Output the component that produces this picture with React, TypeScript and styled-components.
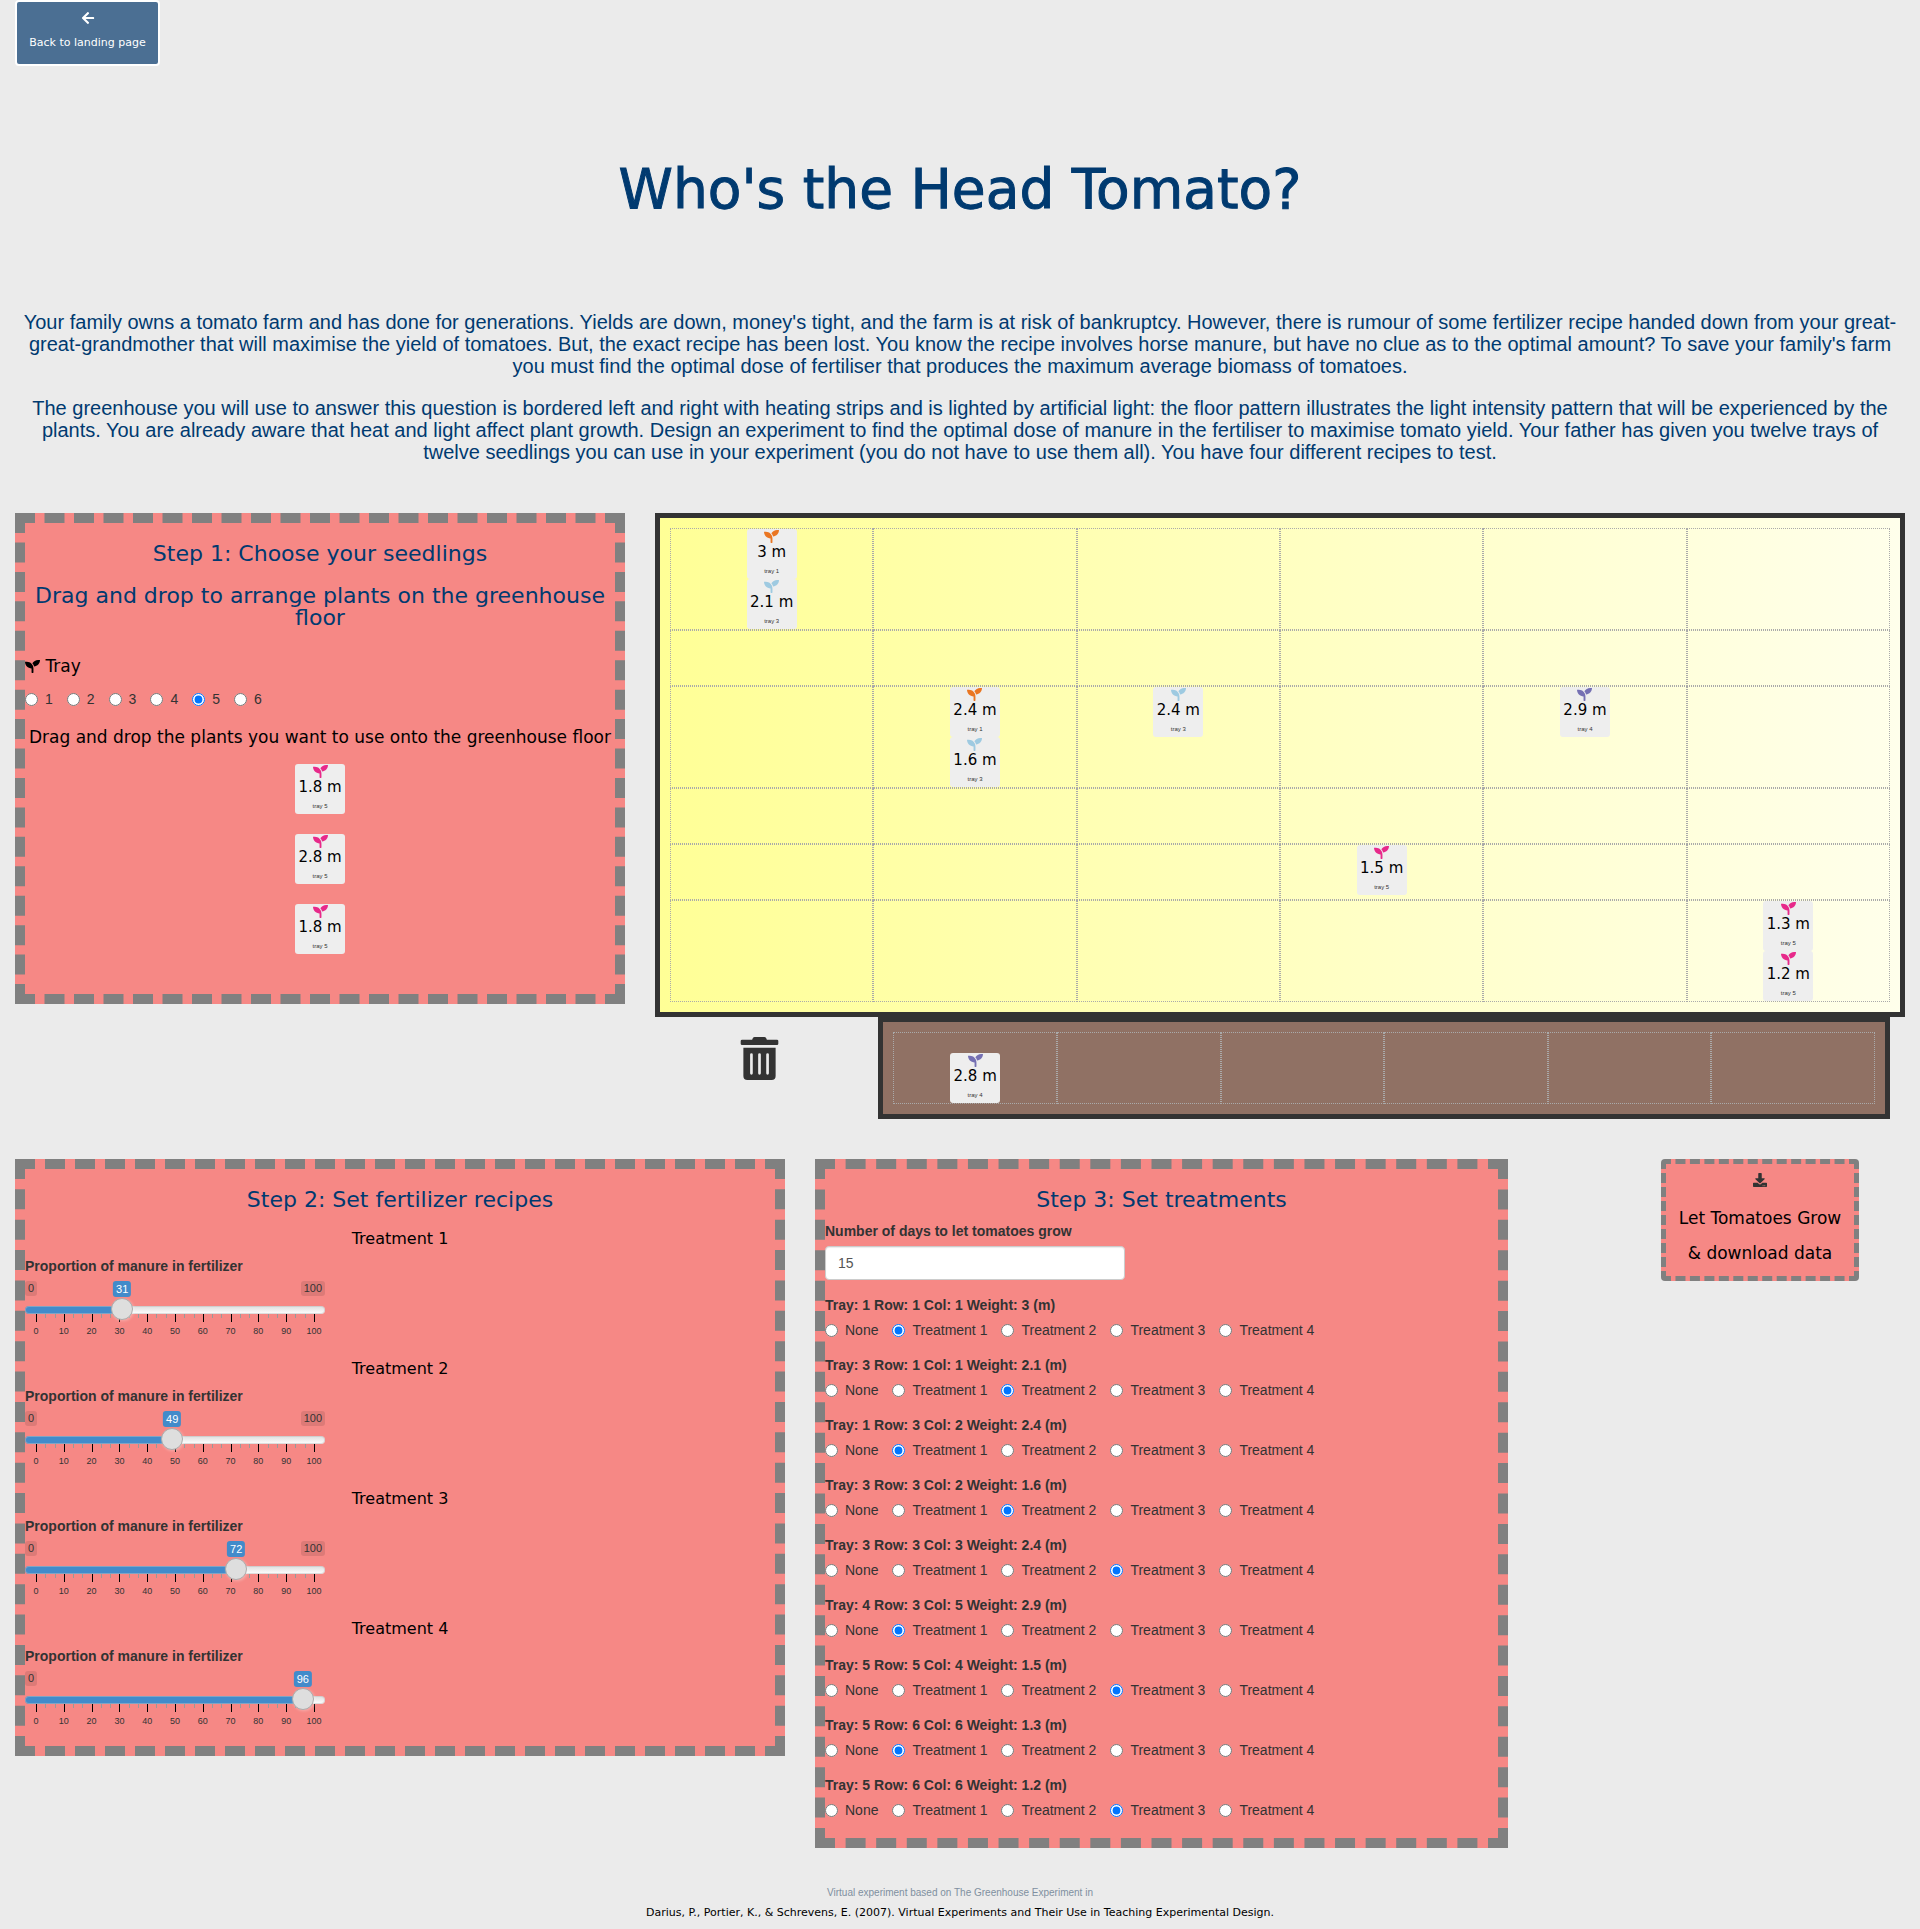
import React, { useState } from "react";
import styled, { createGlobalStyle } from "styled-components";
import { FaArrowLeft, FaDownload, FaSeedling, FaTrashAlt } from "react-icons/fa";

const display = `"DejaVu Sans", sans-serif`;
const body = `"Liberation Sans", Arial, sans-serif`;
const navy = "#003a70";
const salmon = "#f68885";

const GlobalStyle = createGlobalStyle`
  *, *::before, *::after { box-sizing: border-box; }
  body {
    margin: 0;
    background: #ebebeb;
    color: #333;
    font: 14px/20px ${body};
  }
  h1, h2, h3, p { margin: 0; font-weight: 400; }
`;

const Page = styled.div`
  padding: 0 0 6px;
`;

const Header = styled.header`
  padding: 0 15px;
`;

const BackLink = styled.a`
  display: inline-flex;
  flex-direction: column;
  align-items: center;
  gap: 10px;
  height: 66px;
  min-width: 145px;
  padding: 9px 12px;
  border: 2px solid #fff;
  border-radius: 4px;
  background: #4b6f93;
  color: #fff;
  font: 11px/16px ${display};
  text-decoration: none;
`;

const Title = styled.h1`
  margin: 93px 0 92px;
  color: ${navy};
  font: 55px/60px ${display};
  text-align: center;
  -webkit-text-stroke: 1px ${navy};
`;

const Intro = styled.div`
  display: grid;
  gap: 20px;
  color: ${navy};
  font-size: 20px;
  line-height: 22px;
  text-align: center;
`;

const Columns = styled.div<{ $template: string; $top: number }>`
  display: grid;
  grid-template-columns: ${(p) => p.$template};
  align-items: start;
  margin-top: ${(p) => p.$top}px;
`;

const Column = styled.div`
  min-width: 0;
  padding: 0 15px;
`;

const Panel = styled.section<{ $width?: string }>`
  width: ${(p) => p.$width ?? "100%"};
  border: 10px dashed #808080;
  background: ${salmon};
`;

const StepTitle = styled.h2`
  margin-top: 20px;
  color: ${navy};
  font: 22px/22px ${display};
  text-align: center;
`;

const SubTitle = styled.h3<{ $align?: string; $top: number; $size?: number }>`
  margin-top: ${(p) => p.$top}px;
  color: #000;
  font: ${(p) => p.$size ?? 17}px/20px ${display};
  text-align: ${(p) => p.$align ?? "center"};

  svg { vertical-align: -2px; }
`;

const ChoiceGroup = styled.fieldset<{ $top: number }>`
  margin: ${(p) => p.$top}px 0 0;
  padding: 0;
  border: 0;
`;

const GroupLabel = styled.legend`
  display: block;
  margin-bottom: 5px;
  padding: 0;
  font-weight: 700;
`;

const Choice = styled.label`
  display: inline-block;
  vertical-align: top;

  & + & { margin-left: 14px; }

  input {
    float: left;
    margin: 4px 7px 0 0;
  }
`;

const Tray = styled.div`
  display: flex;
  flex-direction: column;
  align-items: center;
  gap: 20px;
  padding: 17px 0 40px;
`;

const PlantTag = styled.div<{ $color: string }>`
  display: flex;
  flex-direction: column;
  align-items: center;
  width: 50px;
  height: 50px;
  border-radius: 3px;
  background: #eee;
  cursor: grab;

  svg { flex: none; color: ${(p) => p.$color}; }
`;

const PlantHeight = styled.span`
  color: #000;
  font: 15px/16px ${display};
  white-space: nowrap;
`;

const PlantTray = styled.span`
  margin-top: 7px;
  font-size: 6px;
  line-height: 8px;
`;

const Plot = styled.div<{ $background: string }>`
  display: grid;
  grid-template-columns: repeat(6, 1fr);
  padding: 10px;
  border: 5px solid #333;
  background: ${(p) => p.$background};
`;

const Cell = styled.div<{ $min: number; $align: string }>`
  display: flex;
  flex-direction: column;
  align-items: center;
  justify-content: ${(p) => p.$align};
  min-height: ${(p) => p.$min}px;
  border: 1px dotted #aaa;
`;

const Bin = styled.button`
  display: block;
  margin: 20px auto 0;
  padding: 0;
  border: 0;
  background: none;
  color: #333;
  line-height: 0;
`;

const Recipe = styled.div`
  & + & { margin-top: 18px; }
`;

const RecipeList = styled.div`
  padding: 18px 0 15px;
`;

const FieldLabel = styled.label<{ $top: number }>`
  display: block;
  margin: ${(p) => p.$top}px 0 5px;
  font-weight: 700;
`;

const Slider = styled.div`
  position: relative;
  width: 300px;
  height: 60px;
`;

const Limits = styled.div`
  display: flex;
  justify-content: space-between;
  height: 18px;
`;

const Limit = styled.span`
  height: 15px;
  padding: 0 3px;
  border-radius: 3px;
  background: rgba(0, 0, 0, 0.1);
  font-size: 11px;
  line-height: 15px;
`;

const Bubble = styled.output`
  position: absolute;
  top: 0;
  padding: 0 3px;
  border-radius: 3px;
  background: #428bca;
  color: #fff;
  font-size: 11px;
  line-height: 16px;
  transform: translateX(-50%);
`;

const Range = styled.input`
  position: relative;
  z-index: 1;
  display: block;
  width: 100%;
  height: 22px;
  margin: 0;
  appearance: none;
  background: none;

  &::-webkit-slider-runnable-track {
    height: 8px;
    border-radius: 8px;
    background:
      linear-gradient(#428bca, #428bca) 0 0 / var(--fill) 100% no-repeat,
      linear-gradient(#dedede, #fff);
    box-shadow: inset 0 0 0 1px rgba(190, 190, 190, 0.5);
  }

  &::-webkit-slider-thumb {
    width: 22px;
    height: 22px;
    margin-top: -8px;
    appearance: none;
    border: 1px solid #ababab;
    border-radius: 50%;
    background: #dedede;
    box-shadow: 1px 1px 3px rgba(255, 255, 255, 0.3);
  }
`;

const Scale = styled.svg`
  display: block;
  width: 100%;
  height: 8px;
  margin-top: -7px;
`;

const ScaleNumbers = styled.div`
  display: flex;
  justify-content: space-between;
  margin-top: 4px;
  padding: 0 1px;
  font-size: 9px;
  line-height: 10px;
`;

const ScaleNumber = styled.span`
  width: 20px;
  text-align: center;
`;

const NumberBox = styled.input`
  display: block;
  width: 300px;
  height: 34px;
  padding: 6px 12px;
  border: 1px solid #ccc;
  border-radius: 4px;
  background: #fff;
  box-shadow: inset 0 1px 1px rgba(0, 0, 0, 0.08);
  color: #555;
  font: inherit;
  appearance: textfield;

  &::-webkit-inner-spin-button { appearance: none; }
`;

const Treatments = styled.div`
  padding-bottom: 18px;
`;

const DownloadButton = styled.button`
  display: flex;
  flex-direction: column;
  align-items: center;
  gap: 15px;
  min-width: 198px;
  margin: 0 auto;
  padding: 9px 10px 13px;
  border: 5px dashed #808080;
  border-radius: 4px;
  background: ${salmon};
  color: #000;
  font: 17px/20px ${display};

  svg {
    margin-bottom: 6px;
    color: #333;
  }
`;

const Footer = styled.footer`
  margin-top: 35px;
  text-align: center;
`;

const Source = styled.p`
  color: #8090a0;
  font-size: 10px;
  line-height: 20px;
`;

const Citation = styled.p`
  color: #000;
  font: 11px/20px ${display};
`;

type Plant = { height: string; tray: number };

const trayColors: Record<number, string> = { 1: "#ea7622", 3: "#9ecae1", 4: "#7570b3", 5: "#e7298a" };

const plants: Array<Plant & { row: number; col: number; treatment: number }> = [
  { tray: 1, row: 1, col: 1, height: "3", treatment: 1 },
  { tray: 3, row: 1, col: 1, height: "2.1", treatment: 2 },
  { tray: 1, row: 3, col: 2, height: "2.4", treatment: 1 },
  { tray: 3, row: 3, col: 2, height: "1.6", treatment: 2 },
  { tray: 3, row: 3, col: 3, height: "2.4", treatment: 3 },
  { tray: 4, row: 3, col: 5, height: "2.9", treatment: 1 },
  { tray: 5, row: 5, col: 4, height: "1.5", treatment: 3 },
  { tray: 5, row: 6, col: 6, height: "1.3", treatment: 1 },
  { tray: 5, row: 6, col: 6, height: "1.2", treatment: 3 },
];

const six = [1, 2, 3, 4, 5, 6];
const options = ["None", "Treatment 1", "Treatment 2", "Treatment 3", "Treatment 4"];

function Seedling({ height, tray }: Plant) {
  return (
    <PlantTag $color={trayColors[tray]} draggable>
      <FaSeedling size={15} />
      <PlantHeight>{height} m</PlantHeight>
      <PlantTray>tray {tray}</PlantTray>
    </PlantTag>
  );
}

function RecipeSlider({ index, initial }: { index: number; initial: number }) {
  const [value, setValue] = useState(initial);
  const at = `calc(11px + (100% - 22px) * ${value / 100})`;
  const id = `manure-${index}`;
  return (
    <Recipe>
      <SubTitle $top={0} $size={16}>Treatment {index}</SubTitle>
      <FieldLabel $top={7} htmlFor={id}>Proportion of manure in fertilizer</FieldLabel>
      <Slider>
        {/* a limit gives way when the value bubble reaches it */}
        <Limits>
          {value > 6 ? <Limit>0</Limit> : <span />}
          {value < 90 && <Limit>100</Limit>}
        </Limits>
        <Bubble htmlFor={id} style={{ left: at }}>{value}</Bubble>
        <Range
          id={id}
          type="range"
          min={0}
          max={100}
          value={value}
          onChange={(e) => setValue(Number(e.target.value))}
          style={{ "--fill": at } as React.CSSProperties}
        />
        <Scale viewBox="0 0 300 8" aria-hidden="true">
          {Array.from({ length: 31 }, (_, i) => (
            <rect
              key={i}
              x={Math.round(11 + (i * 278) / 30)}
              y={0}
              width={1}
              height={i % 3 ? 4 : 8}
              fill={i % 3 ? "#999" : "#000"}
            />
          ))}
        </Scale>
        <ScaleNumbers>
          {Array.from({ length: 11 }, (_, i) => <ScaleNumber key={i}>{i * 10}</ScaleNumber>)}
        </ScaleNumbers>
      </Slider>
    </Recipe>
  );
}

export default function App() {
  const [tray, setTray] = useState(5);
  return (
    <Page>
      <GlobalStyle />
      <Header>
        <BackLink href="#">
          <FaArrowLeft size={14} />
          Back to landing page
        </BackLink>
        <Title>Who's the Head Tomato?</Title>
        <Intro>
          <p>
            Your family owns a tomato farm and has done for generations. Yields are down, money's tight, and the
            farm is at risk of bankruptcy. However, there is rumour of some fertilizer recipe handed down from your
            great-great-grandmother that will maximise the yield of tomatoes. But, the exact recipe has been lost.
            You know the recipe involves horse manure, but have no clue as to the optimal amount? To save your
            family's farm you must find the optimal dose of fertiliser that produces the maximum average biomass of
            tomatoes.
          </p>
          <p>
            The greenhouse you will use to answer this question is bordered left and right with heating strips and
            is lighted by artificial light: the floor pattern illustrates the light intensity pattern that will be
            experienced by the plants. You are already aware that heat and light affect plant growth. Design an
            experiment to find the optimal dose of manure in the fertiliser to maximise tomato yield. Your father
            has given you twelve trays of twelve seedlings you can use in your experiment (you do not have to use
            them all). You have four different recipes to test.
          </p>
        </Intro>
      </Header>

      <Columns $template="1fr 2fr" $top={50}>
        <Column>
          <Panel>
            <StepTitle>Step 1: Choose your seedlings</StepTitle>
            <StepTitle>Drag and drop to arrange plants on the greenhouse floor</StepTitle>
            <SubTitle $top={27} $align="left"><FaSeedling size={15} /> Tray</SubTitle>
            <ChoiceGroup $top={13} aria-label="Tray">
              {six.map((n) => (
                <Choice key={n}>
                  <input type="radio" name="tray" checked={tray === n} onChange={() => setTray(n)} />
                  {n}
                </Choice>
              ))}
            </ChoiceGroup>
            <SubTitle $top={18}>Drag and drop the plants you want to use onto the greenhouse floor</SubTitle>
            <Tray>
              <Seedling height="1.8" tray={5} />
              <Seedling height="2.8" tray={5} />
              <Seedling height="1.8" tray={5} />
            </Tray>
          </Panel>
        </Column>
        <Column>
          <Plot $background="linear-gradient(to right, #ffff96, #ffffeb)">
            {six.map((row) =>
              six.map((col) => (
                <Cell key={`${row}-${col}`} $min={56} $align="flex-start">
                  {plants
                    .filter((p) => p.row === row && p.col === col)
                    .map((p) => <Seedling key={p.tray + p.height} height={p.height} tray={p.tray} />)}
                </Cell>
              ))
            )}
          </Plot>
          <Columns $template="1fr 5fr" $top={0}>
            <Bin aria-label="Remove plant"><FaTrashAlt size={43} /></Bin>
            <Column>
              <Plot $background="#907164">
                {six.map((n) => (
                  <Cell key={n} $min={72} $align="flex-end">
                    {n === 1 && <Seedling height="2.8" tray={4} />}
                  </Cell>
                ))}
              </Plot>
            </Column>
          </Columns>
        </Column>
      </Columns>

      <Columns $template="5fr 5fr 2fr" $top={40}>
        <Column>
          <Panel>
            <StepTitle>Step 2: Set fertilizer recipes</StepTitle>
            <RecipeList>
              {[31, 49, 72, 96].map((v, i) => <RecipeSlider key={i} index={i + 1} initial={v} />)}
            </RecipeList>
          </Panel>
        </Column>
        <Column>
          <Panel $width="90%">
            <StepTitle>Step 3: Set treatments</StepTitle>
            <Treatments>
              <FieldLabel $top={10} htmlFor="days">Number of days to let tomatoes grow</FieldLabel>
              <NumberBox id="days" type="number" defaultValue={15} />
              {plants.map((p, i) => (
                <ChoiceGroup key={i} $top={15}>
                  <GroupLabel>Tray: {p.tray} Row: {p.row} Col: {p.col} Weight: {p.height} (m)</GroupLabel>
                  {options.map((option, n) => (
                    <Choice key={option}>
                      <input type="radio" name={`plant-${i}`} defaultChecked={n === p.treatment} />
                      {option}
                    </Choice>
                  ))}
                </ChoiceGroup>
              ))}
            </Treatments>
          </Panel>
        </Column>
        <Column>
          <DownloadButton>
            <FaDownload size={14} />
            <span>Let Tomatoes Grow</span>
            <span>&amp; download data</span>
          </DownloadButton>
        </Column>
      </Columns>

      <Footer>
        <Source>Virtual experiment based on The Greenhouse Experiment in</Source>
        <Citation>
          Darius, P., Portier, K., &amp; Schrevens, E. (2007). Virtual Experiments and Their Use in Teaching
          Experimental Design.
        </Citation>
      </Footer>
    </Page>
  );
}
